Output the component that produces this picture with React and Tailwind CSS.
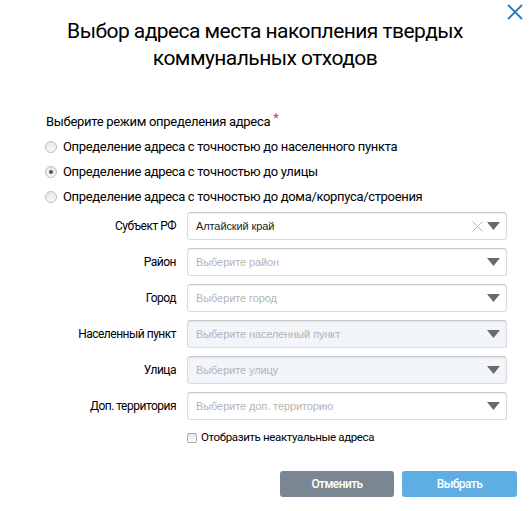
import React from "react";

const Arrow = () => (
  <svg width="13" height="8" viewBox="0 0 13 8" className="shrink-0">
    <path d="M0 0 L13 0 L6.5 8 Z" fill="#6b6b6b" />
  </svg>
);

function Field({ label, value, placeholder, disabled, clear }) {
  return (
    <div className="flex items-center">
      <div className="w-[176px] text-right text-[12px] tracking-[-0.5px] text-black shrink-0">
        {label}
      </div>
      <div
        className={
          "ml-[11px] w-[320px] h-[28px] rounded-[3px] border border-[#dcdcdc] border-t-[#c9c9c9] shadow-[inset_0_1px_2px_rgba(0,0,0,0.08)] flex items-center pl-[8px] pr-[6px] " +
          (disabled ? "bg-[#f2f5f9]" : "bg-white")
        }
      >
        <span
          className={
            "flex-1 text-[11px] tracking-[-0.1px] font-['Liberation_Sans',Arial,sans-serif] " +
            (value ? "text-[#222]" : "text-[#b4b4b4]")
          }
        >
          {value || placeholder}
        </span>
        {clear && (
          <svg width="11" height="11" viewBox="0 0 11 11" className="mr-[4px]">
            <path d="M0.5 0.5 L10.5 10.5 M10.5 0.5 L0.5 10.5" stroke="#b9b9b9" strokeWidth="1" />
          </svg>
        )}
        <Arrow />
      </div>
    </div>
  );
}

function Radio({ checked, children }) {
  return (
    <div className="flex items-center h-[24px]">
      <div className="ml-[45px] w-[12px] h-[12px] rounded-full border border-[#bdbdbd] bg-gradient-to-b from-[#e6e6e6] to-[#f8f8f8] flex items-center justify-center">
        {checked && <div className="w-[4px] h-[4px] rounded-full bg-[#555]" />}
      </div>
      <span className="ml-[6px] text-[13px] tracking-[-0.33px] text-black">{children}</span>
    </div>
  );
}

export default function App() {
  return (
    <div className="relative w-[530px] h-[511px] bg-white font-['Roboto',sans-serif] overflow-hidden">
      <svg width="16" height="16" viewBox="0 0 16 16" className="absolute left-[507px] top-[4px]">
        <path d="M1 1 L15 15 M15 1 L1 15" stroke="#2b7bb3" strokeWidth="1.8" />
      </svg>
      <div className="pt-[18px] text-center text-[21px] tracking-[-0.55px] leading-[27px] text-black">
        Выбор адреса места накопления твердых
        <br />
        коммунальных отходов
      </div>
      <div className="mt-[40px] ml-[46px] text-[13px] tracking-[-0.3px] text-black h-[20px]">
        Выберите режим определения адреса
        <span className="text-[#d33] relative top-[-4px] ml-[3px]">*</span>
      </div>
      <div className="mt-[3px] flex flex-col gap-[1px]">
        <Radio>Определение адреса с точностью до населенного пункта</Radio>
        <Radio checked>Определение адреса с точностью до улицы</Radio>
        <Radio>Определение адреса с точностью до дома/корпуса/строения</Radio>
      </div>
      <div className="mt-[3px] flex flex-col gap-[8px]">
        <Field label="Субъект РФ" value="Алтайский край" clear />
        <Field label="Район" placeholder="Выберите район" />
        <Field label="Город" placeholder="Выберите город" />
        <Field label="Населенный пункт" placeholder="Выберите населенный пункт" disabled />
        <Field label="Улица" placeholder="Выберите улицу" disabled />
        <Field label="Доп. территория" placeholder="Выберите доп. территорию" />
      </div>
      <div className="mt-[9px] ml-[187px] flex items-center">
        <div className="w-[10px] h-[10px] border border-[#aaa] rounded-[2px] bg-gradient-to-b from-[#e8e8e8] to-[#fafafa]" />
        <span className="ml-[4px] text-[11.5px] tracking-[-0.35px] text-black">Отобразить неактуальные адреса</span>
      </div>
      <div className="mt-[25px] flex justify-end gap-[8px] pr-[13px]">
        <button className="w-[114px] h-[26px] rounded-[3px] bg-[#7a8792] text-white text-[12px] tracking-[-0.6px] font-medium">
          Отменить
        </button>
        <button className="w-[115px] h-[26px] rounded-[3px] bg-[#5faee3] text-white text-[12px] tracking-[-0.6px] font-medium">
          Выбрать
        </button>
      </div>
    </div>
  );
}
